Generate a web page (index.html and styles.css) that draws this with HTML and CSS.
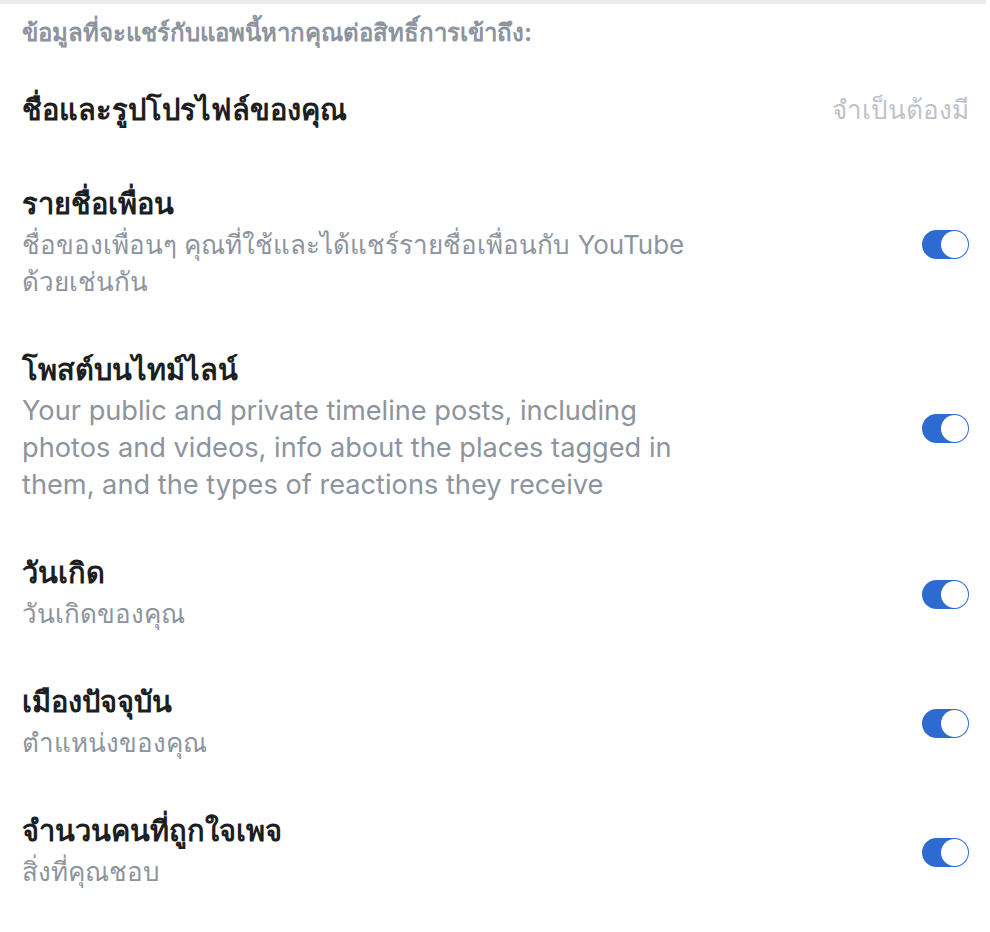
FILE: index.html
```html
<!DOCTYPE html>
<html lang="th">
<head>
<meta charset="utf-8">
<title>ข้อมูลที่จะแชร์กับแอพ</title>
<link rel="stylesheet" href="styles.css">
</head>
<body>
<div class="topline"></div>
<div id="content">
 <div class="intro">ข้อมูลที่จะแชร์กับแอพนี้หากคุณต่อสิทธิ์การเข้าถึง:</div>

 <div class="row row-req">
  <div class="info">
   <div class="title">ชื่อและรูปโปรไฟล์ของคุณ</div>
  </div>
  <div class="req">จำเป็นต้องมี</div>
 </div>

 <div class="row">
  <div class="info">
   <div class="title">รายชื่อเพื่อน</div>
   <div class="desc">ชื่อของเพื่อนๆ คุณที่ใช้และได้แชร์รายชื่อเพื่อนกับ YouTube<br>ด้วยเช่นกัน</div>
  </div>
  <span class="toggle"><span class="knob"></span></span>
 </div>

 <div class="row">
  <div class="info">
   <div class="title">โพสต์บนไทม์ไลน์</div>
   <div class="desc en">Your public and private timeline posts, including<br>photos and videos, info about the places tagged in<br>them, and the types of reactions they receive</div>
  </div>
  <span class="toggle"><span class="knob"></span></span>
 </div>

 <div class="row">
  <div class="info">
   <div class="title">วันเกิด</div>
   <div class="desc">วันเกิดของคุณ</div>
  </div>
  <span class="toggle"><span class="knob"></span></span>
 </div>

 <div class="row">
  <div class="info">
   <div class="title">เมืองปัจจุบัน</div>
   <div class="desc">ตำแหน่งของคุณ</div>
  </div>
  <span class="toggle"><span class="knob"></span></span>
 </div>

 <div class="row">
  <div class="info">
   <div class="title">จำนวนคนที่ถูกใจเพจ</div>
   <div class="desc">สิ่งที่คุณชอบ</div>
  </div>
  <span class="toggle"><span class="knob"></span></span>
 </div>
</div>
</body>
</html>
```

FILE: styles.css
```css
body{
 margin:0;
 background:#fff;
 font-family:"Inter","Noto Sans",sans-serif;
 color:#1c1e21;
}
.topline{
 height:4px;
 width:986px;
 background:#e9ebee;
}
#content{
 padding:14px 21px 0 22px;
}
.intro{
 font-size:24px;
 font-weight:bold;
 color:#8d949e;
 line-height:30px;
}
.row{
 display:flex;
 align-items:center;
 justify-content:space-between;
 padding:25px 0;
}
.row-req{
 align-items:flex-start;
 padding:42px 0 29px;
}
.info{
 max-width:700px;
}
.title{
 font-size:29px;
 font-weight:bold;
 line-height:40px;
}
.desc{
 margin-top:2px;
 font-size:26px;
 color:#8d949e;
 line-height:37px;
}
.desc.en{
 font-size:27.2px;
}
.req{
 font-size:26px;
 color:#bec3c9;
 line-height:40px;
}
.toggle{
 display:flex;
 justify-content:flex-end;
 align-items:center;
 width:47px;
 height:29px;
 margin-top:4px;
 box-sizing:border-box;
 border-radius:15px;
 background:#2d6bd1;
 padding:1px;
}
.knob{
 width:27px;
 height:27px;
 border-radius:50%;
 background:#fff;
}
```
